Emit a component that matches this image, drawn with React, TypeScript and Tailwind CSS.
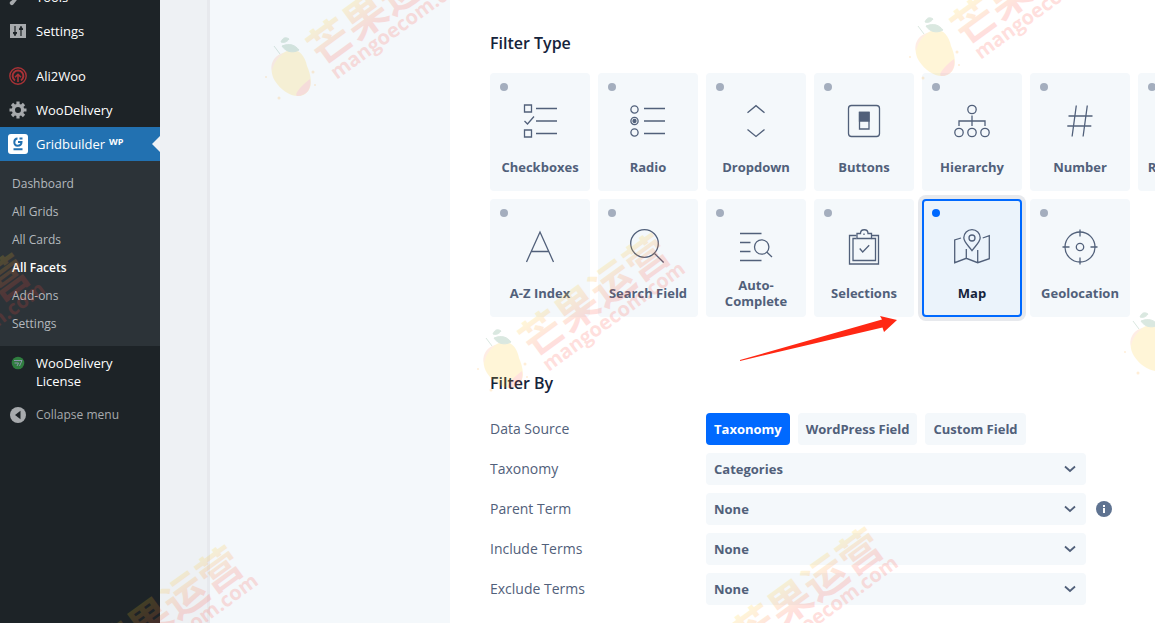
import { useState } from 'react';
import type { ReactNode } from 'react';

const filterTypes: Array<{ name: string; icon: ReactNode }> = [
  {
    name: 'Checkboxes',
    icon: (
      <>
        <path d="M4.5 4h7v7h-7zM4.5 29h7v7h-7zM16 7.5h21M16 20h21M16 32.5h21" />
        <path d="M4.5 20l3 3 6.5-7.5" />
      </>
    ),
  },
  {
    name: 'Radio',
    icon: (
      <>
        <circle cx="6.5" cy="8.5" r="3.6" />
        <circle cx="6.5" cy="20" r="3.6" />
        <circle cx="6.5" cy="20" r="1.5" fill="currentColor" />
        <circle cx="6.5" cy="31.5" r="3.6" />
        <path d="M16 7.5h21M16 20h21M16 32.5h21" />
      </>
    ),
  },
  { name: 'Dropdown', icon: <path d="M11.5 11.7L20 4.7l8.5 7M11.5 28.5l8.5 7 8.5-7" /> },
  {
    name: 'Buttons',
    icon: (
      <>
        <rect x="4.5" y="4.5" width="31" height="31" rx="3" />
        <path d="M15.5 11.5h9.5v16.5h-9.5z" />
        <path d="M15.5 11.5h9.5v8.5h-9.5z" fill="currentColor" />
      </>
    ),
  },
  {
    name: 'Hierarchy',
    icon: (
      <>
        <circle cx="20" cy="8.5" r="4.2" />
        <circle cx="7" cy="31.5" r="4.2" />
        <circle cx="20" cy="31.5" r="4.2" />
        <circle cx="33" cy="31.5" r="4.2" />
        <path d="M20 14.5V25M7 25v-5h26v5" />
      </>
    ),
  },
  { name: 'Number', icon: <path d="M16.3 4.5l-4.2 31M27.3 4.5l-4.2 31M8.5 15h24M7.3 25h24" /> },
  {
    name: 'Range Slider',
    icon: (
      <>
        <circle cx="14" cy="20" r="4" />
        <path d="M3 20h7M18 20h19" />
      </>
    ),
  },
  { name: 'A-Z Index', icon: <path d="M6.5 35L20 5l13.5 30M11.3 24.5h17.4" /> },
  {
    name: 'Search Field',
    icon: (
      <>
        <circle cx="16.5" cy="16.5" r="13.8" />
        <path d="M26.5 26.5l9.2 9" />
      </>
    ),
  },
  {
    name: 'Auto-Complete',
    icon: (
      <>
        <path d="M4 6.5h21.5M4 15.5h10.5M4 24.5h10.5M4 33.5h21.5M30.7 25l5.3 5" />
        <circle cx="25.7" cy="20" r="7.2" />
      </>
    ),
  },
  {
    name: 'Selections',
    icon: (
      <>
        <path d="M12.5 8.5h-7V37h29V8.5h-7" />
        <path d="M12.5 11.5H9v22h22.5v-22h-4" />
        <path d="M13 11.5v-5h3.5c0-5 7.5-5 7.5 0h3.5v5z" />
        <path d="M20 6.5V8M15.7 21.5l3 3.5 6.5-6.7" />
      </>
    ),
  },
  {
    name: 'Map',
    icon: (
      <>
        <path d="M20 23.7c-3-4.5-8.2-8.5-8.2-12.9a8.2 8.2 0 0 1 16.4 0c0 4.4-5.2 8.4-8.2 12.9z" />
        <circle cx="20" cy="11" r="3" />
        <path d="M9 11l-6.3 2v22.7l11.6-4.4 11.4 4.4 11.6-4V8.7L30.7 11M14.3 22v9.3M25.7 23v12.7" />
      </>
    ),
  },
  {
    name: 'Geolocation',
    icon: (
      <>
        <circle cx="20" cy="20" r="15" />
        <circle cx="20" cy="20" r="3.7" />
        <path d="M20 2.5v7M20 30.5v7M2.5 20h7M30.5 20h7" />
      </>
    ),
  },
];

const subMenu = ['Dashboard', 'All Grids', 'All Cards', 'All Facets', 'Add-ons', 'Settings'];

const selectRows = [
  { id: 'taxonomy', label: 'Taxonomy', options: ['Categories', 'Tags'] },
  { id: 'parent-term', label: 'Parent Term', options: ['None'], hint: true },
  { id: 'include-terms', label: 'Include Terms', options: ['None'] },
  { id: 'exclude-terms', label: 'Exclude Terms', options: ['None'] },
];

// centre of the mango in every repeat of the watermark
const watermarks = [
  [291, 70],
  [935, 50],
  [503, 362],
  [1150, 345],
  [-137, 382],
  [76, 674],
  [716, 656],
];

function MenuItem({ icon, children }: { icon: ReactNode; children: ReactNode }) {
  return (
    <a href="#" className="flex py-2 pr-2 text-white">
      <span className="flex h-[18px] w-9 shrink-0 items-center justify-center text-[#a7aaad]">{icon}</span>
      <span>{children}</span>
    </a>
  );
}

function Sidebar() {
  return (
    <nav className="w-40 shrink-0 bg-[#1d2327] text-[13px] leading-[18px]">
      <div className="-mt-5">
        <MenuItem
          icon={
            <svg viewBox="0 0 20 20" className="h-5 w-5" fill="currentColor">
              <path d="M16.7 9.3c-1.7 1.7-4 1.8-5.6.9L5.3 17.5a2 2 0 0 1-2.9-2.9l7.3-5.8c-.9-1.6-.7-3.9.9-5.5 1.3-1.3 3-1.7 4.5-1.4l-2.6 2.7.6 2.2 2.2.6 2.7-2.6c.3 1.5-.1 3.2-1.3 4.5z" />
            </svg>
          }
        >
          Tools
        </MenuItem>
        <MenuItem
          icon={
            <svg viewBox="0 0 16 14" className="h-[14px] w-4">
              <path d="M0 0h16v14H0z" fill="#a7aaad" />
              <path d="M5 2v10M11 2v10" stroke="#1d2327" strokeWidth="1.2" />
              <path d="M3 8h4v1.5l-2 2-2-2zM9 6h4V4.5l-2-2-2 2z" fill="#1d2327" />
            </svg>
          }
        >
          Settings
        </MenuItem>
      </div>

      <div className="mt-[11px]">
        <MenuItem
          icon={
            <svg viewBox="0 0 18 18" className="h-[18px] w-[18px]" fill="none" stroke="#a93236">
              <circle cx="9" cy="9" r="8.2" strokeWidth="1.4" />
              <path d="M6 13.5a5.4 5.4 0 1 1 6 0" strokeWidth="2" />
              <path d="M9 15V7.5M6 10.3l3-3 3 3" strokeWidth="1.6" />
            </svg>
          }
        >
          Ali2Woo
        </MenuItem>
        <MenuItem
          icon={
            <svg viewBox="-9 -9 18 18" className="h-[18px] w-[18px]" fill="none" stroke="currentColor">
              <circle r="4.6" strokeWidth="3.2" />
              <path
                d="M0-8.5v3M0 5.5v3M-8.5 0h3M5.5 0h3M-6-6l2 2M4 4l2 2M-6 6l2-2M4-4l2-2"
                strokeWidth="3.2"
              />
            </svg>
          }
        >
          WooDelivery
        </MenuItem>
        <a href="#" className="relative flex bg-[#2271b1] py-2 text-white">
          <span className="flex h-[18px] w-9 shrink-0 items-center justify-center">
            <svg viewBox="0 0 20 20" className="h-5 w-5" fill="none" stroke="#2271b1" strokeWidth="2">
              <rect width="20" height="20" rx="3" fill="#fff" stroke="none" />
              <path d="M9.5 4.5C5.5 4.5 5 11.8 9.5 11.8c3 0 4-1.3 4-3.8H10M5.5 15.3h9M11.5 4.5h3" />
            </svg>
          </span>
          <span className="flex gap-1">
            Gridbuilder <span className="text-[9px] leading-[14px] font-bold">WP</span>
          </span>
          <span className="absolute top-1/2 right-0 -translate-y-1/2 border-y-8 border-r-8 border-y-transparent border-r-[#f0f2f5]" />
        </a>
      </div>

      <ul className="bg-[#2c3338] pt-[9px] pb-2 text-[12px] leading-[18px]">
        {subMenu.map((item) => (
          <li key={item}>
            <a
              href="#"
              className={`block px-3 py-[5px] ${item === 'All Facets' ? 'font-semibold text-white' : 'text-[#b4b9be]'}`}
            >
              {item}
            </a>
          </li>
        ))}
      </ul>

      <MenuItem
        icon={
          <svg viewBox="0 0 14 14" className="h-[14px] w-[14px]" fill="none">
            <circle cx="7" cy="7" r="6.3" fill="#2f7d3f" />
            <path d="M3 4.5h8L8.5 10M3.5 7h4L6 10" stroke="#8c94ab" />
          </svg>
        }
      >
        WooDelivery License
      </MenuItem>
      <button type="button" className="flex py-2 text-[12px] leading-[18px] text-[#a7aaad]">
        <span className="flex h-[18px] w-9 items-center justify-center">
          <svg viewBox="0 0 16 16" className="h-4 w-4">
            <circle cx="8" cy="8" r="8" fill="#a7aaad" />
            <path d="M10.5 3.8v8.4L5 8z" fill="#1d2327" />
          </svg>
        </span>
        Collapse menu
      </button>
    </nav>
  );
}

function Watermark() {
  return (
    <svg className="pointer-events-none absolute top-0 left-0 h-full w-full" aria-hidden="true">
      <defs>
        <linearGradient id="brand" x1="0" y1="0" x2="0" y2="1">
          <stop offset="20%" stopColor="#ffd21f" />
          <stop offset="75%" stopColor="#ff4a3c" />
        </linearGradient>
      </defs>
      {watermarks.map(([x, y]) => (
        <g key={`${x}-${y}`} transform={`translate(${x} ${y})`} opacity="0.17">
          <path
            d="M-10-16C-20-12-22 2-16 11-9 22 5 30 14 24 23 18 20 5 16-4 14-15 7-22-2-20z"
            fill="#ffc91c"
          />
          <path d="M19 9c2 9-3 17-13 17-3-1 2-9 13-17z" fill="#ff5a3c" />
          <path d="M-10-16c-8 3-11 11-9 17 2-8 5-13 12-18z" fill="#ff9a6c" />
          <path
            d="M-17-24l6 8M-9-24c3 5 10 8 17 4-4-5-9-7-17-4zM-10-28c2-5 5-5 8-3-2 3-5 4-8 3z"
            fill="#2c7a50"
            stroke="#2c7a50"
          />
          <g fill="#ffa01c">
            <circle cx="-25" cy="7" r="1" />
            <circle cx="-12" cy="28" r="1.5" />
            <circle cx="22" cy="2" r="1.5" />
            <circle cx="24" cy="15" r="1" />
          </g>
          <g transform="rotate(-36)" className="font-['Noto_Sans_CJK_SC',sans-serif] font-bold">
            <text x="27" y="16" fontSize="43" fill="url(#brand)">
              芒果运营
            </text>
            <text x="31" y="35" fontSize="20" fill="#ff4a3c" className="font-['Open_Sans',sans-serif]">
              mangoecom.com
            </text>
          </g>
        </g>
      ))}
    </svg>
  );
}

export default function App() {
  const [filterType, setFilterType] = useState('Map');
  const [source, setSource] = useState('Taxonomy');

  return (
    <div className="relative flex h-screen overflow-hidden bg-[#eef1f4] font-['Open_Sans','Noto_Sans',sans-serif]">
      <Sidebar />

      <div className="ml-[47px] flex min-w-0 flex-1 border-l-[3px] border-[#e7e9ed]">
        <aside className="w-60 shrink-0 bg-[#f4f8fb]" />

        <main className="min-w-0 flex-1 overflow-hidden bg-white pl-10 text-[#51607a]">
          <h2 className="mt-8 text-[16px] leading-[22px] font-semibold text-[#15233b]">Filter Type</h2>
          <div className="mt-[19px] grid grid-cols-[repeat(7,100px)] gap-2">
            {filterTypes.map(({ name, icon }) => (
              <label
                key={name}
                className={`flex h-[118px] flex-col rounded ${
                  filterType === name
                    ? 'bg-[#ebf3fb] text-[#15233b] ring-4 ring-[#e7e9ed] outline-2 -outline-offset-2 outline-[#0069ff]'
                    : 'bg-[#f4f8fb]'
                }`}
              >
                <input
                  type="radio"
                  name="filter-type"
                  checked={filterType === name}
                  onChange={() => setFilterType(name)}
                  className="mt-[10px] ml-[10px] h-2 w-2 appearance-none rounded-full bg-[#a4aebe] checked:bg-[#0069ff]"
                />
                <svg
                  viewBox="0 0 40 40"
                  className="mt-[10px] h-10 w-10 self-center text-[#51607a]"
                  fill="none"
                  stroke="currentColor"
                  strokeWidth="1.3"
                >
                  {icon}
                </svg>
                <span className="mt-2 flex h-9 items-center justify-center px-2 text-center text-[13px] leading-4 font-bold">
                  {name}
                </span>
              </label>
            ))}
          </div>

          <h2 className="mt-[55px] text-[16px] leading-[22px] font-semibold text-[#15233b]">Filter By</h2>
          <div className="mt-[19px] flex flex-col gap-2">
            <div className="flex h-8 items-center">
              <span className="w-[216px] shrink-0 text-[14px] leading-5">Data Source</span>
              <div className="flex gap-2">
                {['Taxonomy', 'WordPress Field', 'Custom Field'].map((name) => (
                  <button
                    key={name}
                    type="button"
                    onClick={() => setSource(name)}
                    className={`h-8 rounded px-2 pt-0.5 text-[13px] font-bold whitespace-nowrap ${
                      source === name ? 'bg-[#0069ff] text-white' : 'bg-[#f4f8fb]'
                    }`}
                  >
                    {name}
                  </button>
                ))}
              </div>
            </div>

            {selectRows.map(({ id, label, options, hint }) => (
              <div key={id} className="flex h-8 items-center">
                <label htmlFor={id} className="w-[216px] shrink-0 text-[14px] leading-5">
                  {label}
                </label>
                <div className="relative w-[380px]">
                  <select
                    id={id}
                    className="h-8 w-full appearance-none rounded bg-[#f4f8fb] px-2 pt-0.5 text-[13px] font-bold"
                  >
                    {options.map((option) => (
                      <option key={option}>{option}</option>
                    ))}
                  </select>
                  <svg
                    viewBox="0 0 12 8"
                    className="pointer-events-none absolute top-3 right-[10px] h-2 w-3"
                    fill="none"
                    stroke="currentColor"
                    strokeWidth="1.8"
                  >
                    <path d="M1 1.5L6 6l5-4.5" />
                  </svg>
                </div>
                {hint && (
                  <button type="button" aria-label="More information" className="ml-[10px]">
                    <svg viewBox="0 0 16 16" className="h-4 w-4">
                      <circle cx="8" cy="8" r="8" fill="#5f7391" />
                      <path d="M7 4h2v2H7zM7 7h2v5H7z" fill="#fff" />
                    </svg>
                  </button>
                )}
              </div>
            ))}
          </div>
        </main>
      </div>

      <Watermark />
      <svg className="pointer-events-none absolute top-[314px] left-[738px] h-12 w-40" aria-hidden="true">
        <path d="M2 46L144 5.5 142 2l17 4-13 12-1.5-4.5L2 47z" fill="#ff2814" />
      </svg>
    </div>
  );
}
